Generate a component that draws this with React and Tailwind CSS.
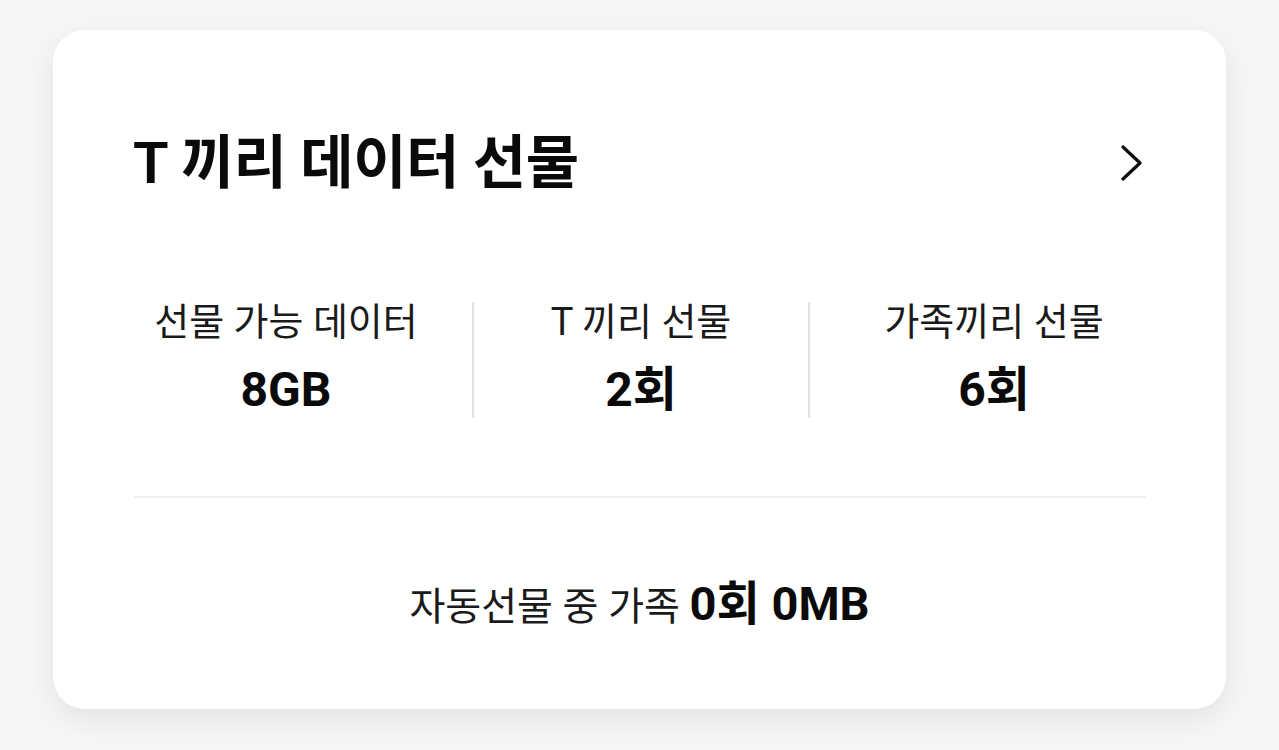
const STATS = [
  { label: '선물 가능 데이터', value: '8GB', width: 'w-[372px]' },
  { label: 'T 끼리 선물', value: '2회', width: 'w-[336px]' },
  { label: '가족끼리 선물', value: '6회', width: 'w-[370px]' },
]

export default function App() {
  return (
    <div
      className="w-[1279px] h-[750px] bg-[#f7f7f7] pt-[30px] pl-[53px] overflow-hidden"
      style={{ fontFamily: 'Roboto, "Noto Sans CJK KR", sans-serif' }}
    >
      <div className="w-[1173px] h-[679px] bg-white rounded-[32px] shadow-[0_10px_34px_rgba(0,0,0,0.09)] flex flex-col">
        {/* Header */}
        <div className="flex items-center justify-between pl-[80px] pr-[82px] pt-[104px]">
          <h2 className="text-[58px] leading-none font-semibold text-[#0a0a0a] tracking-[-0.5px]">T 끼리 데이터 선물</h2>
          <svg width="24" height="36" viewBox="0 0 24 36" fill="none" className="text-[#0a0a0a]">
            <path d="M3 2 L20 18 L3 34" stroke="currentColor" strokeWidth="3.2" strokeLinecap="round" strokeLinejoin="round" />
          </svg>
        </div>

        {/* Stats */}
        <div className="flex items-stretch pl-[47px] mt-[110px]">
          {STATS.map((s, i) => (
            <div key={s.label} className={`${s.width} flex ${i > 0 ? 'border-l-2 border-[#e2e2e2]' : ''}`}>
              <div className="flex-1 flex flex-col items-center">
                <span className="text-[38px] leading-[40px] text-[#1a1a1a]">{s.label}</span>
                <span className="text-[48px] leading-[50px] font-bold text-[#0a0a0a] mt-[23px] mb-[3px]">{s.value}</span>
              </div>
            </div>
          ))}
        </div>

        {/* Divider */}
        <div className="mx-[80px] mt-[78px] h-[2px] bg-[#efefef]" />

        {/* Footer */}
        <div className="flex-1 flex items-center justify-center">
          <p className="text-[39px] text-[#1a1a1a] leading-none">
            자동선물 중 가족 <span className="text-[47px] font-bold text-[#0a0a0a]">0회 0MB</span>
          </p>
        </div>
      </div>
    </div>
  )
}
